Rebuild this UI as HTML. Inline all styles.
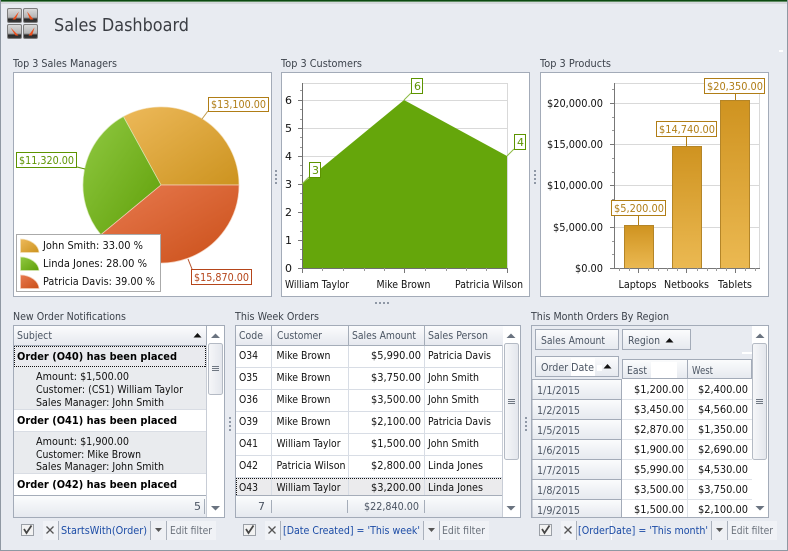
<!DOCTYPE html>
<html><head><meta charset="utf-8"><title>Sales Dashboard</title>
<style>
html,body{margin:0;padding:0;background:#e8ebf1;overflow:hidden}
svg{display:block}
text{font-family:"DejaVu Sans","Liberation Sans",sans-serif;font-size:11px;fill:#111}
.t{fill:#3c424b}
.h{fill:#4b5563}
.b{font-weight:bold;fill:#000}
.f{fill:#1c4ca6}
.e{fill:#6a717b}
.c{shape-rendering:crispEdges}
</style></head><body>
<svg xmlns="http://www.w3.org/2000/svg" width="788" height="551" viewBox="0 0 788 551">
<defs>
<linearGradient id="po" x1="0" y1="0" x2="1" y2="1"><stop offset="0" stop-color="#edb95a"/><stop offset="1" stop-color="#cc931f"/></linearGradient>
<linearGradient id="pg" x1="0" y1="0" x2="1" y2="1"><stop offset="0" stop-color="#90c942"/><stop offset="1" stop-color="#5f9f08"/></linearGradient>
<linearGradient id="pr" x1="0" y1="0" x2="1" y2="1"><stop offset="0" stop-color="#e87a50"/><stop offset="1" stop-color="#ca4f18"/></linearGradient>
<linearGradient id="bar" x1="0" y1="0" x2="0" y2="1"><stop offset="0" stop-color="#cf9320"/><stop offset="1" stop-color="#ebb952"/></linearGradient>
<linearGradient id="hd" x1="0" y1="0" x2="0" y2="1"><stop offset="0" stop-color="#fbfcfd"/><stop offset="1" stop-color="#e6e9ef"/></linearGradient>
<linearGradient id="tb" x1="0" y1="0" x2="1" y2="0"><stop offset="0" stop-color="#f6f7f9"/><stop offset="1" stop-color="#e3e6ec"/></linearGradient>
<linearGradient id="ic" x1="0" y1="0" x2="0" y2="1"><stop offset="0" stop-color="#dcdcdc"/><stop offset=".62" stop-color="#b5b5b5"/><stop offset=".76" stop-color="#2a2a2a"/><stop offset="1" stop-color="#3c3c3c"/></linearGradient>
</defs>

<!-- window chrome -->
<rect width="788" height="551" fill="#e8ebf1"/>
<rect class="c" x="0" y="0" width="788" height="1" fill="#0c4a12"/>
<rect class="c" x="0" y="1" width="788" height="1" fill="#5d8a62"/>
<rect class="c" x="0" y="2" width="788" height="2" fill="#d5d9dc"/>
<rect class="c" x="0" y="0" width="1" height="551" fill="#8f98a3"/>
<rect class="c" x="787" y="0" width="1" height="551" fill="#8f98a3"/>
<rect class="c" x="0" y="550" width="788" height="1" fill="#8f98a3"/>
<rect class="c" x="779" y="50" width="4" height="2" fill="#fff"/>

<!-- logo -->
<g>
<rect x="7.5" y="8.5" width="14" height="14" rx="1.5" fill="url(#ic)" stroke="#7d7d7d"/>
<rect x="23.5" y="8.5" width="14" height="14" rx="1.5" fill="url(#ic)" stroke="#7d7d7d"/>
<rect x="7.5" y="24.5" width="14" height="14" rx="1.5" fill="url(#ic)" stroke="#7d7d7d"/>
<rect x="23.5" y="24.5" width="14" height="14" rx="1.5" fill="url(#ic)" stroke="#7d7d7d"/>
<path d="M12.500 19.500 L19 11.500 L15.500 19.500Z M30 19.500 L27 11.500 L33.500 19.500Z M15.500 35.500 L10.500 27.500 L18.500 35.500Z M28.500 35.500 L34.500 27.500 L32 35.500Z" fill="#ee4f1c"/>
</g>
<text x="54" y="31" textLength="135" lengthAdjust="spacingAndGlyphs" style="font-size:18px;fill:#3b3e44">Sales Dashboard</text>

<!-- titles -->
<text class="t" x="13" y="67" textLength="104" lengthAdjust="spacingAndGlyphs">Top 3 Sales Managers</text>
<text class="t" x="281" y="67" textLength="81" lengthAdjust="spacingAndGlyphs">Top 3 Customers</text>
<text class="t" x="540" y="67" textLength="71" lengthAdjust="spacingAndGlyphs">Top 3 Products</text>
<text class="t" x="13" y="320" textLength="113" lengthAdjust="spacingAndGlyphs">New Order Notifications</text>
<text class="t" x="235" y="320" textLength="84" lengthAdjust="spacingAndGlyphs">This Week Orders</text>
<text class="t" x="531" y="320" textLength="138" lengthAdjust="spacingAndGlyphs">This Month Orders By Region</text>

<!-- chart panels -->
<rect class="c" x="13.5" y="72.5" width="258" height="224" fill="#fff" stroke="#a3abb8"/>
<rect class="c" x="281.5" y="72.5" width="248" height="224" fill="#fff" stroke="#a3abb8"/>
<rect class="c" x="540.5" y="72.5" width="228" height="224" fill="#fff" stroke="#a3abb8"/>

<!-- splitter grips -->
<g class="c" fill="#8f98a6">
<rect x="275" y="170" width="2" height="2"/><rect x="275" y="174" width="2" height="2"/><rect x="275" y="178" width="2" height="2"/><rect x="275" y="182" width="2" height="2"/>
<rect x="534" y="170" width="2" height="2"/><rect x="534" y="174" width="2" height="2"/><rect x="534" y="178" width="2" height="2"/><rect x="534" y="182" width="2" height="2"/>
<rect x="375" y="302" width="2" height="2"/><rect x="379" y="302" width="2" height="2"/><rect x="383" y="302" width="2" height="2"/><rect x="387" y="302" width="2" height="2"/>
<rect x="229" y="417" width="2" height="2"/><rect x="229" y="421" width="2" height="2"/><rect x="229" y="425" width="2" height="2"/><rect x="229" y="429" width="2" height="2"/>
<rect x="525" y="417" width="2" height="2"/><rect x="525" y="421" width="2" height="2"/><rect x="525" y="425" width="2" height="2"/><rect x="525" y="429" width="2" height="2"/>
</g>

<!-- pie -->
<path d="M161 185 L239 185 A78 78 0 0 0 123.4 116.6 Z" fill="url(#po)" stroke="#f3dfb8" stroke-width=".7"/>
<path d="M161 185 L123.4 116.6 A78 78 0 0 0 100.9 234.7 Z" fill="url(#pg)" stroke="#d6e8b4" stroke-width=".7"/>
<path d="M161 185 L100.9 234.7 A78 78 0 0 0 239 185 Z" fill="url(#pr)" stroke="#f4cdb8" stroke-width=".7"/>
<path d="M202 119 L208 111" stroke="#c09a4a" fill="none"/>
<path d="M77 167 L85 169" stroke="#5d9400" fill="none"/>
<path d="M188 259 L192 269" stroke="#b5512a" fill="none"/>
<rect class="c" x="208.5" y="97.5" width="60" height="14" fill="#fff" stroke="#b07d16"/>
<text x="211" y="108" textLength="55" lengthAdjust="spacingAndGlyphs" style="fill:#b07d16">$13,100.00</text>
<rect class="c" x="16.5" y="152.5" width="60" height="15" fill="#fff" stroke="#5d9400"/>
<text x="19" y="164" textLength="55" lengthAdjust="spacingAndGlyphs" style="fill:#5d9400">$11,320.00</text>
<rect class="c" x="191.5" y="269.5" width="60" height="15" fill="#fff" stroke="#b5451a"/>
<text x="194" y="281" textLength="55" lengthAdjust="spacingAndGlyphs" style="fill:#b5451a">$15,870.00</text>

<!-- legend -->
<rect class="c" x="16.5" y="234.5" width="144" height="57" fill="#fff" stroke="#aaa"/>
<path d="M20.500 239 A19 14 0 0 1 39 252.500 L20.500 252.500Z" fill="url(#po)" stroke="#f3dfb8" stroke-width=".7"/>
<path d="M20.500 257 A19 14 0 0 1 39 270.500 L20.500 270.500Z" fill="url(#pg)" stroke="#d6e8b4" stroke-width=".7"/>
<path d="M20.500 275 A19 14 0 0 1 39 288.500 L20.500 288.500Z" fill="url(#pr)" stroke="#f4cdb8" stroke-width=".7"/>
<text x="43" y="249" textLength="100" lengthAdjust="spacingAndGlyphs">John Smith: 33.00 %</text>
<text x="43" y="267" textLength="104" lengthAdjust="spacingAndGlyphs">Linda Jones: 28.00 %</text>
<text x="43" y="285" textLength="112" lengthAdjust="spacingAndGlyphs">Patricia Davis: 39.00 %</text>

<!-- area chart -->
<path class="c" d="M302 83.5H507.5M302 100.5H507.5M302 128.5H507.5M302 156.5H507.5M507.5 83V268" stroke="#d9d9d9" fill="none"/>
<path d="M302 184 L404 100 L507 156 L507 268 L302 268Z" fill="#65a60b"/>
<path class="c" d="M302.5 83V268.5M302 268.5H507.5" stroke="#6f6f6f" fill="none"/>
<path class="c" d="M298 100.5H302M298 128.5H302M298 156.5H302M298 184.5H302M298 212.5H302M298 240.5H302M298 268.5H302M302.5 268V273M404.5 268V273M507.5 268V273" stroke="#777" fill="none"/>
<path class="c" d="M300 90.5H302M300 109.5H302M300 119.5H302M300 137.5H302M300 147.5H302M300 165.5H302M300 175.5H302M300 193.5H302M300 203.5H302M300 221.5H302M300 231.5H302M300 249.5H302M300 259.5H302M322.5 268V271M343.5 268V271M364.5 268V271M384.5 268V271M425.5 268V271M446.5 268V271M466.5 268V271M486.5 268V271" stroke="#999" fill="none"/>
<g>
<text x="285" y="104" textLength="7" lengthAdjust="spacingAndGlyphs">6</text>
<text x="285" y="132" textLength="7" lengthAdjust="spacingAndGlyphs">5</text>
<text x="285" y="160" textLength="7" lengthAdjust="spacingAndGlyphs">4</text>
<text x="285" y="188" textLength="7" lengthAdjust="spacingAndGlyphs">3</text>
<text x="285" y="216" textLength="7" lengthAdjust="spacingAndGlyphs">2</text>
<text x="285" y="244" textLength="7" lengthAdjust="spacingAndGlyphs">1</text>
<text x="285" y="272" textLength="7" lengthAdjust="spacingAndGlyphs">0</text>
<text x="285" y="288" textLength="64" lengthAdjust="spacingAndGlyphs">William Taylor</text>
<text x="376.5" y="288" textLength="54" lengthAdjust="spacingAndGlyphs">Mike Brown</text>
<text x="455" y="288" textLength="68" lengthAdjust="spacingAndGlyphs">Patricia Wilson</text>
</g>
<path d="M404 100 L411 93 M302 184 L309 177 M507 156 L514 149" stroke="#8dbb46" fill="none"/>
<rect class="c" x="411.5" y="78.5" width="11" height="15" fill="#fff" stroke="#5d9400"/>
<rect class="c" x="309.5" y="162.5" width="11" height="15" fill="#fff" stroke="#5d9400"/>
<rect class="c" x="514.5" y="134.5" width="11" height="15" fill="#fff" stroke="#5d9400"/>
<text x="414" y="90" style="fill:#5d9400">6</text>
<text x="312" y="174" style="fill:#5d9400">3</text>
<text x="517" y="146" style="fill:#5d9400">4</text>

<!-- bar chart -->
<path class="c" d="M614 83.5H760.5M614 103.5H760M614 144.5H760M614 185.5H760M614 227.5H760M759.5 83V268" stroke="#d9d9d9" fill="none"/>
<rect class="c" x="624.5" y="225.5" width="29" height="43" fill="url(#bar)" stroke="#b48528"/>
<rect class="c" x="672.5" y="146.5" width="29" height="122" fill="url(#bar)" stroke="#b48528"/>
<rect class="c" x="720.5" y="100.5" width="29" height="168" fill="url(#bar)" stroke="#b48528"/>
<path class="c" d="M614.5 83V268.5M610 268.5H760" stroke="#777" fill="none"/>
<path class="c" d="M610 103.5H614M610 144.5H614M610 185.5H614M610 227.5H614M638.5 268V273M686.5 268V273M735.5 268V273" stroke="#777" fill="none"/>
<path class="c" d="M612 89.5H614M612 117.5H614M612 130.5H614M612 158.5H614M612 172.5H614M612 199.5H614M612 213.5H614M612 241.5H614M612 254.5H614M619.5 268V271M629.5 268V271M648.5 268V271M658.5 268V271M667.5 268V271M677.5 268V271M697.5 268V271M707.5 268V271M716.5 268V271M726.5 268V271M745.5 268V271M755.5 268V271" stroke="#999" fill="none"/>
<text x="547" y="107" textLength="56" lengthAdjust="spacingAndGlyphs">$20,000.00</text>
<text x="547" y="148" textLength="56" lengthAdjust="spacingAndGlyphs">$15,000.00</text>
<text x="547" y="189" textLength="56" lengthAdjust="spacingAndGlyphs">$10,000.00</text>
<text x="553" y="231" textLength="50" lengthAdjust="spacingAndGlyphs">$5,000.00</text>
<text x="575" y="272" textLength="28" lengthAdjust="spacingAndGlyphs">$0.00</text>
<text x="618.5" y="288" textLength="38" lengthAdjust="spacingAndGlyphs">Laptops</text>
<text x="664" y="288" textLength="45" lengthAdjust="spacingAndGlyphs">Netbooks</text>
<text x="718" y="288" textLength="34" lengthAdjust="spacingAndGlyphs">Tablets</text>
<path class="c" d="M638.5 215V225M686.5 136V146M735.5 93V100" stroke="#b07d16" fill="none"/>
<rect class="c" x="611.5" y="200.5" width="54" height="15" fill="#fff" stroke="#b07d16"/>
<rect class="c" x="656.5" y="121.5" width="60" height="15" fill="#fff" stroke="#b07d16"/>
<rect class="c" x="704.5" y="78.5" width="60" height="15" fill="#fff" stroke="#b07d16"/>
<text x="614" y="212" textLength="50" lengthAdjust="spacingAndGlyphs" style="fill:#b07d16">$5,200.00</text>
<text x="659" y="133" textLength="56" lengthAdjust="spacingAndGlyphs" style="fill:#b07d16">$14,740.00</text>
<text x="707" y="90" textLength="56" lengthAdjust="spacingAndGlyphs" style="fill:#b07d16">$20,350.00</text>

<!-- GRID 1 -->
<rect class="c" x="13.5" y="325.5" width="211" height="192" fill="#fff" stroke="#a3abb8"/>
<rect class="c" x="14" y="326" width="193" height="19" fill="url(#hd)"/>
<path class="c" d="M14 345.5H207M206.5 326V345" stroke="#a5adb9" fill="none"/>
<text class="h" x="17" y="339" textLength="35" lengthAdjust="spacingAndGlyphs">Subject</text>
<path d="M193.5 337.500H201.500L197.500 333Z" fill="#111"/>
<rect class="c" x="14" y="346" width="192" height="21" fill="#e9eaee"/>
<path class="c" d="M14 346.5H206M14 366.5H206M14.5 346V367M205.5 346V367" stroke="#111" stroke-dasharray="1 1" fill="none"/>
<rect class="c" x="14" y="367" width="193" height="42" fill="#e9ebee"/>
<rect class="c" x="14" y="431" width="193" height="42" fill="#e9ebee"/>
<path class="c" d="M14 409.5H207M14 431.5H207M14 473.5H207" stroke="#d9dde4" fill="none"/>
<text class="b" x="17" y="360" textLength="160" lengthAdjust="spacingAndGlyphs">Order (O40) has been placed</text>
<text x="36" y="380" textLength="93" lengthAdjust="spacingAndGlyphs">Amount: $1,500.00</text>
<text x="36" y="393" textLength="147" lengthAdjust="spacingAndGlyphs">Customer: (CS1) William Taylor</text>
<text x="36" y="406" textLength="128" lengthAdjust="spacingAndGlyphs">Sales Manager: John Smith</text>
<text class="b" x="17" y="424" textLength="160" lengthAdjust="spacingAndGlyphs">Order (O41) has been placed</text>
<text x="36" y="445" textLength="93" lengthAdjust="spacingAndGlyphs">Amount: $1,900.00</text>
<text x="36" y="458" textLength="105" lengthAdjust="spacingAndGlyphs">Customer: Mike Brown</text>
<text x="36" y="470" textLength="128" lengthAdjust="spacingAndGlyphs">Sales Manager: John Smith</text>
<text class="b" x="17" y="488" textLength="160" lengthAdjust="spacingAndGlyphs">Order (O42) has been placed</text>
<rect class="c" x="14" y="496" width="193" height="21" fill="url(#hd)"/>
<path class="c" d="M14 495.5H207M204.5 499V514" stroke="#a5adb9" fill="none"/>
<text class="h" x="194" y="510">5</text>
<!-- scrollbar 1 -->
<path d="M211 338H220L215.500 333.500Z M211 506H220L215.500 510.500Z" fill="#6a7380"/>
<rect x="208.5" y="343.5" width="14" height="51" rx="2" fill="url(#tb)" stroke="#b4bac4"/>
<path class="c" d="M212 366.5H219M212 368.5H219M212 370.5H219" stroke="#6f7782" fill="none"/>
<path class="c" d="M206.5 345V517" stroke="#c8cdd6" fill="none"/>
<!-- filter 1 -->
<rect class="c" x="21.5" y="524.5" width="12" height="11" fill="#f2f2f2" stroke="#9a9fa6"/>
<path d="M24 529 L26.5 533 L31.5 525.5" stroke="#444" stroke-width="1.7" fill="none"/>
<rect class="c" x="43" y="521" width="15" height="19" fill="#f0f2f6"/>
<path d="M46.5 526.5L53.5 533.5M53.5 526.5L46.5 533.5" stroke="#555" stroke-width="1.3"/>
<path class="c" d="M58.5 521V540M150.5 521V540M166.5 521V540" stroke="#aab1bc" fill="none"/>
<text class="f" x="61" y="534" textLength="86" lengthAdjust="spacingAndGlyphs">StartsWith(Order)</text>
<rect class="c" x="151" y="521" width="15" height="19" fill="#eef0f4"/>
<path d="M155 528H162L158.5 532Z" fill="#555"/>
<rect class="c" x="167" y="521" width="49" height="19" fill="#f0f2f6"/>
<text class="e" x="170" y="534" textLength="42" lengthAdjust="spacingAndGlyphs">Edit filter</text>

<!-- GRID 2 -->
<rect class="c" x="235.5" y="325.5" width="285" height="192" fill="#fff" stroke="#a3abb8"/>
<rect class="c" x="236" y="326" width="267" height="19" fill="url(#hd)"/>
<path class="c" d="M236 345.5H503M271.5 326V345M348.5 326V345M424.5 326V345" stroke="#a5adb9" fill="none"/>
<text class="h" x="239" y="339" textLength="24" lengthAdjust="spacingAndGlyphs">Code</text>
<text class="h" x="277" y="339" textLength="45" lengthAdjust="spacingAndGlyphs">Customer</text>
<text class="h" x="352" y="339" textLength="64" lengthAdjust="spacingAndGlyphs">Sales Amount</text>
<text class="h" x="428" y="339" textLength="60" lengthAdjust="spacingAndGlyphs">Sales Person</text>
<rect class="c" x="236" y="478" width="267" height="17" fill="#ebebed"/>
<path class="c" d="M236 367.5H503M236 389.5H503M236 411.5H503M236 433.5H503M236 455.5H503M236 477.5H503M271.5 346V495M348.5 346V495M424.5 346V495" stroke="#d8dde5" fill="none"/>
<path class="c" d="M236 478.5H503M236.5 478V495M502.5 478V495" stroke="#111" stroke-dasharray="1 1" fill="none"/>
<g>
<text x="239" y="359" textLength="19" lengthAdjust="spacingAndGlyphs">O34</text><text x="276.5" y="359" textLength="54" lengthAdjust="spacingAndGlyphs">Mike Brown</text><text x="371" y="359" textLength="50" lengthAdjust="spacingAndGlyphs">$5,990.00</text><text x="428" y="359" textLength="63" lengthAdjust="spacingAndGlyphs">Patricia Davis</text>
<text x="239" y="381" textLength="19" lengthAdjust="spacingAndGlyphs">O35</text><text x="276.5" y="381" textLength="54" lengthAdjust="spacingAndGlyphs">Mike Brown</text><text x="371" y="381" textLength="50" lengthAdjust="spacingAndGlyphs">$3,750.00</text><text x="428" y="381" textLength="51" lengthAdjust="spacingAndGlyphs">John Smith</text>
<text x="239" y="403" textLength="19" lengthAdjust="spacingAndGlyphs">O36</text><text x="276.5" y="403" textLength="54" lengthAdjust="spacingAndGlyphs">Mike Brown</text><text x="371" y="403" textLength="50" lengthAdjust="spacingAndGlyphs">$3,500.00</text><text x="428" y="403" textLength="51" lengthAdjust="spacingAndGlyphs">John Smith</text>
<text x="239" y="425" textLength="19" lengthAdjust="spacingAndGlyphs">O39</text><text x="276.5" y="425" textLength="54" lengthAdjust="spacingAndGlyphs">Mike Brown</text><text x="371" y="425" textLength="50" lengthAdjust="spacingAndGlyphs">$2,100.00</text><text x="428" y="425" textLength="63" lengthAdjust="spacingAndGlyphs">Patricia Davis</text>
<text x="239" y="447" textLength="19" lengthAdjust="spacingAndGlyphs">O41</text><text x="276.5" y="447" textLength="64" lengthAdjust="spacingAndGlyphs">William Taylor</text><text x="371" y="447" textLength="50" lengthAdjust="spacingAndGlyphs">$1,500.00</text><text x="428" y="447" textLength="51" lengthAdjust="spacingAndGlyphs">John Smith</text>
<text x="239" y="469" textLength="19" lengthAdjust="spacingAndGlyphs">O42</text><text x="276.5" y="469" textLength="69" lengthAdjust="spacingAndGlyphs">Patricia Wilson</text><text x="371" y="469" textLength="50" lengthAdjust="spacingAndGlyphs">$2,800.00</text><text x="428" y="469" textLength="55" lengthAdjust="spacingAndGlyphs">Linda Jones</text>
<text x="239" y="491" textLength="19" lengthAdjust="spacingAndGlyphs">O43</text><text x="276.5" y="491" textLength="64" lengthAdjust="spacingAndGlyphs">William Taylor</text><text x="371" y="491" textLength="50" lengthAdjust="spacingAndGlyphs">$3,200.00</text><text x="428" y="491" textLength="55" lengthAdjust="spacingAndGlyphs">Linda Jones</text>
</g>
<rect class="c" x="236" y="496" width="267" height="21" fill="url(#hd)"/>
<path class="c" d="M236 495.5H503M271.5 500V513M347.5 500V513M424.5 500V513" stroke="#a5adb9" fill="none"/>
<text class="h" x="258" y="510">7</text>
<text class="h" x="364" y="510" textLength="55" lengthAdjust="spacingAndGlyphs">$22,840.00</text>
<!-- scrollbar 2 -->
<path d="M506.500 338H515.500L511 333.500Z M506.500 506H515.500L511 510.500Z" fill="#6a7380"/>
<rect x="504.5" y="343.5" width="14" height="116" rx="2" fill="url(#tb)" stroke="#b4bac4"/>
<path class="c" d="M508 399.5H515M508 401.5H515M508 403.5H515" stroke="#6f7782" fill="none"/>
<path class="c" d="M502.5 345V517" stroke="#c8cdd6" fill="none"/>
<!-- filter 2 -->
<rect class="c" x="243.5" y="524.5" width="12" height="11" fill="#f2f2f2" stroke="#9a9fa6"/>
<path d="M246 529 L248.5 533 L253.5 525.5" stroke="#444" stroke-width="1.7" fill="none"/>
<rect class="c" x="265" y="521" width="15" height="19" fill="#f0f2f6"/>
<path d="M268.5 526.5L275.5 533.5M275.5 526.5L268.5 533.5" stroke="#555" stroke-width="1.3"/>
<path class="c" d="M280.5 521V540M423.5 521V540M439.5 521V540" stroke="#aab1bc" fill="none"/>
<text class="f" x="283" y="534" textLength="137" lengthAdjust="spacingAndGlyphs">[Date Created] = 'This week'</text>
<rect class="c" x="424" y="521" width="15" height="19" fill="#eef0f4"/>
<path d="M428 528H435L431.5 532Z" fill="#555"/>
<rect class="c" x="440" y="521" width="49" height="19" fill="#f0f2f6"/>
<text class="e" x="442" y="534" textLength="43" lengthAdjust="spacingAndGlyphs">Edit filter</text>

<!-- GRID 3 -->
<rect class="c" x="531.5" y="325.5" width="237" height="192" fill="#fff" stroke="#a3abb8"/>
<rect class="c" x="532" y="326" width="220" height="53" fill="#e8ebf1"/>
<rect class="c" x="742" y="352" width="10" height="2" fill="#fff"/>
<rect class="c" x="535.5" y="329.5" width="83" height="20" fill="url(#hd)" stroke="#a3abb8"/>
<text class="h" x="541" y="344" textLength="64" lengthAdjust="spacingAndGlyphs">Sales Amount</text>
<rect class="c" x="622.5" y="329.5" width="68" height="20" fill="url(#hd)" stroke="#a3abb8"/>
<text class="h" x="628" y="344" textLength="32" lengthAdjust="spacingAndGlyphs">Region</text>
<path d="M665.500 342.500H673.500L669.500 338Z" fill="#111"/>
<rect class="c" x="535.5" y="356.5" width="83" height="20" fill="url(#hd)" stroke="#a3abb8"/>
<rect class="c" x="571" y="358" width="24" height="18" fill="#fff"/>
<rect class="c" x="597" y="365" width="5" height="6" fill="#fff"/>
<text class="h" x="541" y="371" textLength="53" lengthAdjust="spacingAndGlyphs">Order Date</text>
<path d="M603.500 368.500H611.500L607.500 364Z" fill="#111"/>
<rect class="c" x="622.5" y="359.5" width="65" height="19" fill="url(#hd)" stroke="#a3abb8"/>
<rect class="c" x="687.5" y="359.5" width="64" height="19" fill="url(#hd)" stroke="#a3abb8"/>
<rect class="c" x="651" y="362" width="26" height="16" fill="#fff"/>
<text class="h" x="627" y="374" textLength="20" lengthAdjust="spacingAndGlyphs">East</text>
<text class="h" x="692" y="374" textLength="21" lengthAdjust="spacingAndGlyphs">West</text>
<!-- row headers -->
<g class="c" fill="url(#hd)" stroke="#a3abb8">
<rect x="532" y="379.5" width="89.5" height="20"/><rect x="532" y="399.5" width="89.5" height="20"/><rect x="532" y="419.5" width="89.5" height="20"/><rect x="532" y="439.5" width="89.5" height="20"/><rect x="532" y="459.5" width="89.5" height="20"/><rect x="532" y="479.5" width="89.5" height="20"/><rect x="532" y="499.5" width="89.5" height="18"/>
</g>
<path class="c" d="M622 399.5H752M622 419.5H752M622 439.5H752M622 459.5H752M622 479.5H752M622 499.5H752M687.5 379V517" stroke="#dfe3e9" fill="none"/>
<text class="h" x="537" y="394" textLength="43" lengthAdjust="spacingAndGlyphs">1/1/2015</text>
<text class="h" x="537" y="414" textLength="43" lengthAdjust="spacingAndGlyphs">1/2/2015</text>
<text class="h" x="537" y="434" textLength="43" lengthAdjust="spacingAndGlyphs">1/5/2015</text>
<text class="h" x="537" y="454" textLength="43" lengthAdjust="spacingAndGlyphs">1/6/2015</text>
<text class="h" x="537" y="474" textLength="43" lengthAdjust="spacingAndGlyphs">1/7/2015</text>
<text class="h" x="537" y="494" textLength="43" lengthAdjust="spacingAndGlyphs">1/8/2015</text>
<text class="h" x="537" y="514" textLength="43" lengthAdjust="spacingAndGlyphs">1/9/2015</text>
<text x="634" y="393" textLength="50" lengthAdjust="spacingAndGlyphs">$1,200.00</text><text x="698" y="393" textLength="50" lengthAdjust="spacingAndGlyphs">$2,400.00</text>
<text x="634" y="413" textLength="50" lengthAdjust="spacingAndGlyphs">$3,450.00</text><text x="698" y="413" textLength="50" lengthAdjust="spacingAndGlyphs">$4,560.00</text>
<text x="634" y="433" textLength="50" lengthAdjust="spacingAndGlyphs">$2,870.00</text><text x="698" y="433" textLength="50" lengthAdjust="spacingAndGlyphs">$1,350.00</text>
<text x="634" y="453" textLength="50" lengthAdjust="spacingAndGlyphs">$1,900.00</text><text x="698" y="453" textLength="50" lengthAdjust="spacingAndGlyphs">$2,690.00</text>
<text x="634" y="473" textLength="50" lengthAdjust="spacingAndGlyphs">$5,990.00</text><text x="698" y="473" textLength="50" lengthAdjust="spacingAndGlyphs">$4,530.00</text>
<text x="634" y="493" textLength="50" lengthAdjust="spacingAndGlyphs">$3,500.00</text><text x="698" y="493" textLength="50" lengthAdjust="spacingAndGlyphs">$3,750.00</text>
<text x="634" y="513" textLength="50" lengthAdjust="spacingAndGlyphs">$1,500.00</text><text x="698" y="513" textLength="50" lengthAdjust="spacingAndGlyphs">$2,100.00</text>
<!-- scrollbar 3 -->
<path d="M755.500 338H764.500L760 333.500Z M755.500 506H764.500L760 510.500Z" fill="#6a7380"/>
<rect x="752.5" y="343.5" width="14" height="116" rx="2" fill="url(#tb)" stroke="#b4bac4"/>
<path class="c" d="M756 399.5H763M756 401.5H763M756 403.5H763" stroke="#6f7782" fill="none"/>
<!-- filter 3 -->
<rect class="c" x="539.5" y="524.5" width="12" height="11" fill="#f2f2f2" stroke="#9a9fa6"/>
<path d="M542 529 L544.5 533 L549.5 525.5" stroke="#444" stroke-width="1.7" fill="none"/>
<rect class="c" x="561" y="521" width="15" height="19" fill="#f0f2f6"/>
<path d="M564.5 526.5L571.5 533.5M571.5 526.5L564.5 533.5" stroke="#555" stroke-width="1.3"/>
<path class="c" d="M576.5 521V540M711.5 521V540M727.5 521V540" stroke="#aab1bc" fill="none"/>
<rect class="c" x="611" y="521" width="1" height="19" fill="#fff"/>
<text class="f" x="578" y="534" textLength="130" lengthAdjust="spacingAndGlyphs">[OrderDate] = 'This month'</text>
<rect class="c" x="712" y="521" width="15" height="19" fill="#eef0f4"/>
<path d="M716 528H723L719.5 532Z" fill="#555"/>
<rect class="c" x="728" y="521" width="49" height="19" fill="#f0f2f6"/>
<text class="e" x="731" y="534" textLength="42" lengthAdjust="spacingAndGlyphs">Edit filter</text>
</svg>
</body></html>
